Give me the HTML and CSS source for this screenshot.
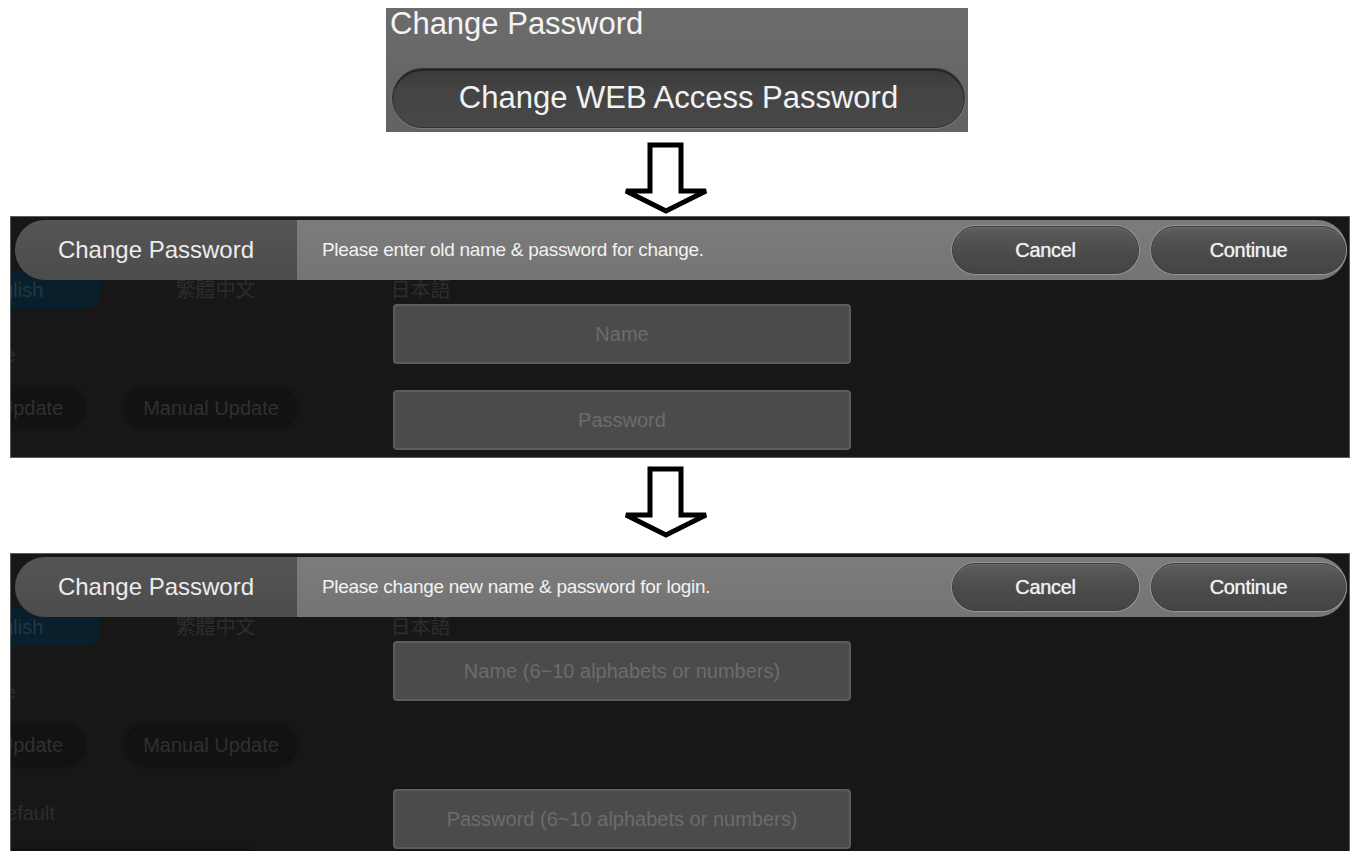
FILE: index.html
```html
<!DOCTYPE html>
<html lang="en">
<head>
    <meta charset="UTF-8">
    <meta name="viewport" content="width=device-width, initial-scale=1.0">
    <title>Change Password</title>
    <link rel="stylesheet" href="styles.css">
</head>
<body>

<div class="sheet">

    <!-- step 1: settings menu entry -->
    <div class="menu-card">
        <div class="menu-title">Change Password</div>
        <button class="menu-btn">Change WEB Access Password</button>
    </div>

    <svg class="step-arrow" width="90" height="74" viewBox="0 0 90 74">
        <polygon points="29,4 60,4 60,50 85,50 45,70 5,50 29,50" fill="#fff" stroke="#000" stroke-width="5"/>
    </svg>

    <!-- step 2: old credentials -->
    <div class="screen screen-short">
        <div class="page">
            <div class="lang-row">
                <div class="lang-cell"><span class="lang-pill">English</span></div>
                <div class="lang-cell">繁體中文</div>
                <div class="lang-cell">日本語</div>
            </div>
            <div class="page-title title-fw">Firmware Update</div>
            <div class="page-btns">
                <span class="page-btn btn-auto">Auto Update</span>
                <span class="page-btn">Manual Update</span>
            </div>
            <div class="page-title title-def">Load Default</div>
            <div class="page-btns"><span class="page-btn btn-wide">Load Default Settings</span></div>
        </div>

        <div class="dialog">
            <div class="dialog-bar">
                <div class="bar-title">Change Password</div>
                <div class="bar-body">
                    <div class="bar-msg">Please enter old name &amp; password for change.</div>
                    <button class="bar-btn btn-cancel">Cancel</button>
                    <button class="bar-btn btn-continue">Continue</button>
                </div>
            </div>
            <div class="fields">
                <input type="text" class="field" placeholder="Name">
                <input type="password" class="field" placeholder="Password">
            </div>
        </div>
    </div>

    <svg class="step-arrow arrow-second" width="90" height="74" viewBox="0 0 90 74">
        <polygon points="29,4 60,4 60,50 85,50 45,70 5,50 29,50" fill="#fff" stroke="#000" stroke-width="5"/>
    </svg>

    <!-- step 3: new credentials -->
    <div class="screen screen-tall">
        <div class="page">
            <div class="lang-row">
                <div class="lang-cell"><span class="lang-pill">English</span></div>
                <div class="lang-cell">繁體中文</div>
                <div class="lang-cell">日本語</div>
            </div>
            <div class="page-title title-fw">Firmware Update</div>
            <div class="page-btns">
                <span class="page-btn btn-auto">Auto Update</span>
                <span class="page-btn">Manual Update</span>
            </div>
            <div class="page-title title-def">Load Default</div>
            <div class="page-btns"><span class="page-btn btn-wide">Load Default Settings</span></div>
        </div>

        <div class="dialog">
            <div class="dialog-bar">
                <div class="bar-title">Change Password</div>
                <div class="bar-body">
                    <div class="bar-msg">Please change new name &amp; password for login.</div>
                    <button class="bar-btn btn-cancel">Cancel</button>
                    <button class="bar-btn btn-continue">Continue</button>
                </div>
            </div>
            <div class="fields fields-wide">
                <input type="text" class="field" placeholder="Name (6~10 alphabets or numbers)">
                <input type="password" class="field" placeholder="Password (6~10 alphabets or numbers)">
            </div>
        </div>
    </div>

</div>

</body>
</html>
```

FILE: styles.css
```css
/* Change password walkthrough */
body {
    margin: 0;
    padding: 0;
    background-color: #fff;
    font-family: "Liberation Sans", Arial, "Noto Sans CJK TC", sans-serif;
    overflow: hidden;
}

.sheet {
    width: 1354px;
    height: 851px;
    display: flex;
    flex-direction: column;
    overflow: hidden;
}

/* ---- menu entry ---- */
.menu-card {
    width: 582px;
    height: 124px;
    margin: 8px 0 0 386px;
    background: linear-gradient(#6c6c6c, #626262);
    box-sizing: border-box;
    flex-shrink: 0;
}

.menu-title {
    padding: 0 4px;
    font-size: 31px;
    line-height: 32px;
    color: #f4f4f4;
}

.menu-btn {
    display: block;
    width: 573px;
    height: 60px;
    margin: 28px 0 0 6px;
    border: 1px solid #333;
    border-radius: 30px;
    background: linear-gradient(#3a3a3a, #444 40%, #474747);
    box-shadow: inset 0 2px 0 #242424, 0 1px 0 #7c7c7c, 1px 0 0 #6f6f6f, -1px 0 0 #6f6f6f;
    color: #f2f2f2;
    font-family: inherit;
    font-size: 31px;
    padding: 0;
}

/* ---- arrows ---- */
.step-arrow {
    display: block;
    margin: 9px 0 0 621px;
    flex-shrink: 0;
}

.arrow-second {
    margin-top: 7px;
}

/* ---- device screens ---- */
.screen {
    position: relative;
    width: 1340px;
    margin-left: 10px;
    background-color: #171717;
    border: 1px solid #5c5c5c;
    box-sizing: border-box;
    overflow: hidden;
    flex-shrink: 0;
}

.screen-short {
    height: 242px;
    margin-top: 1px;
}

.screen-tall {
    height: 310px;
    margin-top: 14px;
}

/* dimmed settings page under the dialog */
.page {
    margin-left: -161px;
    padding-top: 54px;
    color: #2d2d2d;
    font-size: 20px;
}

.lang-row {
    display: flex;
    padding-left: 58px;
    height: 38px;
    align-items: center;
}

.lang-cell {
    width: 205px;
    text-align: center;
    line-height: 38px;
}

.lang-pill {
    display: block;
    width: 180px;
    margin: 0 auto;
    height: 38px;
    border-radius: 19px;
    background-color: #0a1f2c;
    color: #1d3a4a;
}

.page-title {
    height: 24px;
    line-height: 24px;
    text-align: right;
}

.title-fw {
    width: 166px;
    margin-top: 34px;
}

.title-def {
    width: 205px;
    margin-top: 36px;
}

.page-btns {
    display: flex;
    gap: 42px;
    padding-left: 81px;
    margin-top: 21px;
}

.page-btn {
    height: 40px;
    line-height: 40px;
    padding: 0 17px;
    border-radius: 20px;
    background-color: #121212;
    box-shadow: 0 0 4px #0c0c0c;
    color: #303030;
}

.btn-auto {
    padding: 0 21px;
}

.btn-wide {
    width: 330px;
    margin: 4px 0 0 -31px;
    text-align: center;
}

/* ---- change password dialog ---- */
.dialog {
    position: absolute;
    top: 0;
    left: 0;
    right: 0;
    bottom: 0;
    padding: 3px 2px 0 4px;
}

.dialog-bar {
    display: flex;
    height: 60px;
}

.bar-title {
    width: 282px;
    flex-shrink: 0;
    border-radius: 30px 0 0 30px;
    background: linear-gradient(#555, #4c4c4c);
    color: #ececec;
    font-size: 24px;
    line-height: 60px;
    text-align: center;
}

.bar-body {
    flex: 1;
    display: flex;
    align-items: center;
    gap: 12px;
    padding-left: 25px;
    border-radius: 0 30px 30px 0;
    background: linear-gradient(#7c7c7c, #747474);
}

.bar-msg {
    flex: 1;
    color: #f2f2f2;
    font-size: 19px;
    letter-spacing: -0.3px;
}

.bar-btn {
    height: 48px;
    border: 1px solid #3e3e3e;
    border-radius: 24px;
    background: linear-gradient(#5e5e5e, #525252 30%, #4a4a4a 60%, #444);
    box-shadow: 0 0 0 1px #959595, inset 0 1px 0 #6c6c6c;
    color: #f0f0f0;
    font-family: inherit;
    font-size: 20px;
    letter-spacing: -0.3px;
    text-shadow: 0 0 1px #ddd;
    padding: 0;
}

.btn-cancel {
    width: 187px;
}

.btn-continue {
    width: 195px;
    margin-right: 1px;
}

.fields {
    display: flex;
    flex-direction: column;
    gap: 26px;
    margin: 24px 0 0 378px;
}

.fields-wide {
    gap: 88px;
}

.field {
    width: 458px;
    height: 60px;
    box-sizing: border-box;
    border: 2px solid #5c5c5c;
    border-radius: 4px;
    background-color: #4b4b4b;
    color: #ccc;
    font-family: inherit;
    font-size: 20px;
    text-align: center;
    outline: none;
}

.field::placeholder {
    color: #6c6c6c;
}
```
